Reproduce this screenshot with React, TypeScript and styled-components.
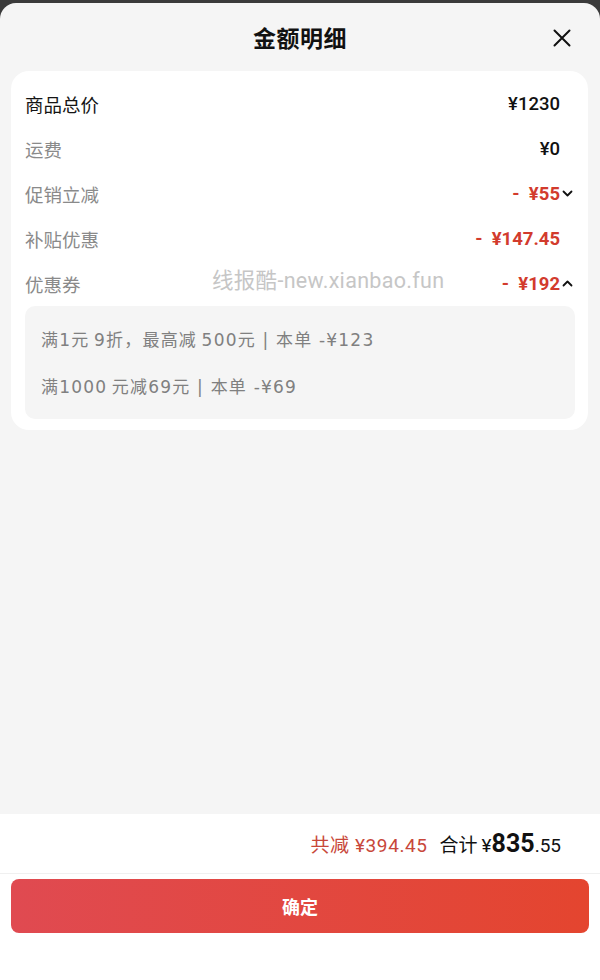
import React from "react";
import styled, { createGlobalStyle } from "styled-components";

const Global = createGlobalStyle`
  html, body { margin: 0; padding: 0; background: #3b3b3b; }
  body { font-family: "Noto Sans CJK SC", Roboto, "Noto Sans", sans-serif; }
  * { box-sizing: border-box; }
`;

const Sheet = styled.div`
  margin-top: 3px;
  min-height: 977px;
  background: #f5f5f5;
  border-radius: 16px 16px 0 0;
  display: flex;
  flex-direction: column;
  overflow: hidden;
`;

const Header = styled.div`
  height: 68px;
  display: flex;
  align-items: center;
  justify-content: center;
  position: relative;
`;

const Title = styled.div`
  font-size: 23px;
  font-weight: 700;
  color: #111;
  letter-spacing: 0.5px;
`;

const Close = styled.button`
  position: absolute;
  right: 28px;
  top: 25px;
  width: 20px;
  height: 20px;
  padding: 0;
  border: 0;
  background: transparent;
  display: flex;
  align-items: center;
  justify-content: center;
`;

const Body = styled.div`
  flex: 1;
  padding: 0 12px 0 11px;
`;

const Card = styled.div`
  position: relative;
  background: #fff;
  border-radius: 18px;
  padding: 10px 13px 11px 14px;
`;

const Row = styled.div`
  height: 45px;
  display: flex;
  align-items: center;
`;

const Label = styled.div<{ $strong?: boolean }>`
  flex: 1;
  font-size: 18.5px;
  color: ${(p) => (p.$strong ? "#151515" : "#8a8a8a")};
`;

const Value = styled.div<{ $red?: boolean }>`
  font-family: Roboto, "Noto Sans CJK SC", sans-serif;
  font-size: 18.5px;
  font-weight: ${(p) => (p.$red ? 700 : 500)};
  color: ${(p) => (p.$red ? "#d23b2d" : "#111")};
  white-space: pre;
`;

const ArrowSlot = styled.div`
  width: 15px;
  height: 20px;
  display: flex;
  align-items: center;
  justify-content: center;
`;

const SubBox = styled.div`
  background: #f5f5f5;
  border-radius: 10px;
  padding: 9px 16px 10px;
`;

const SubLine = styled.div`
  height: 47px;
  display: flex;
  align-items: center;
  font-size: 17px;
  letter-spacing: 1.2px;
  color: #808080;
  font-family: "DejaVu Sans", "Noto Sans CJK SC", sans-serif;
  font-weight: 400;
  white-space: pre;
`;

const Watermark = styled.div`
  position: absolute;
  left: 201px;
  top: 192px;
  font-family: Roboto, "Noto Sans CJK SC", sans-serif;
  font-size: 21.5px;
  letter-spacing: 0.3px;
  color: #c6c6c6;
  pointer-events: none;
`;

const Footer = styled.div`
  background: #fff;
  padding-bottom: 47px;
`;

const Summary = styled.div`
  height: 60px;
  display: flex;
  align-items: center;
  justify-content: flex-end;
  gap: 12px;
  padding-right: 39px;
  border-bottom: 1px solid #f0f0f0;
  font-family: Roboto, "Noto Sans CJK SC", sans-serif;
`;

const Saved = styled.div`
  font-size: 19px;
  letter-spacing: 0.6px;
  color: #c8473a;
`;

const Total = styled.div`
  font-size: 19px;
  color: #111;
  display: flex;
  align-items: baseline;
`;

const Big = styled.span`
  font-size: 25px;
  font-weight: 700;
`;

const Yen = styled.span`
  margin-left: 4px;
`;

const Confirm = styled.button`
  display: block;
  margin: 5px 11px 0;
  width: calc(100% - 22px);
  height: 54px;
  border: 0;
  border-radius: 8px;
  background: linear-gradient(90deg, #e04a51 0%, #e4452f 100%);
  color: #fff;
  font-size: 18px;
  font-weight: 700;
  font-family: "Noto Sans CJK SC", sans-serif;
`;

const Chevron = ({ up }: { up?: boolean }) => (
  <svg width="11" height="7" viewBox="0 0 11 7">
    <path
      d={up ? "M1.5 5.5 L5.5 1.5 L9.5 5.5" : "M1.5 1.5 L5.5 5.5 L9.5 1.5"}
      fill="none"
      stroke="#111"
      strokeWidth="1.8"
      strokeLinecap="round"
      strokeLinejoin="round"
    />
  </svg>
);

const rows: { label: string; value: string; strong?: boolean; red?: boolean; arrow?: "up" | "down" }[] = [
  { label: "商品总价", value: "¥1230", strong: true },
  { label: "运费", value: "¥0" },
  { label: "促销立减", value: "-  ¥55", red: true, arrow: "down" },
  { label: "补贴优惠", value: "-  ¥147.45", red: true },
  { label: "优惠券", value: "-  ¥192", red: true, arrow: "up" },
];

export default function App() {
  return (
    <>
      <Global />
      <Sheet>
        <Header>
          <Title>金额明细</Title>
          <Close aria-label="close">
            <svg width="18" height="18" viewBox="0 0 18 18">
              <path d="M1.5 1.5 L16.5 16.5 M16.5 1.5 L1.5 16.5" stroke="#111" strokeWidth="2" strokeLinecap="round" />
            </svg>
          </Close>
        </Header>
        <Body>
          <Card>
            {rows.map((r) => (
              <Row key={r.label}>
                <Label $strong={r.strong}>{r.label}</Label>
                <Value $red={r.red}>{r.value}</Value>
                <ArrowSlot>{r.arrow && <Chevron up={r.arrow === "up"} />}</ArrowSlot>
              </Row>
            ))}
            <SubBox>
              <SubLine>{"满1元\u20099折，最高减\u2009500元 | 本单 -¥123"}</SubLine>
              <SubLine>{"满1000\u2009元减69元 | 本单 -¥69"}</SubLine>
            </SubBox>
            <Watermark>线报酷-new.xianbao.fun</Watermark>
          </Card>
        </Body>
        <Footer>
          <Summary>
            <Saved>共减 ¥394.45</Saved>
            <Total>
              合计<Yen>¥</Yen>
              <Big>835</Big>.55
            </Total>
          </Summary>
          <Confirm>确定</Confirm>
        </Footer>
      </Sheet>
    </>
  );
}
